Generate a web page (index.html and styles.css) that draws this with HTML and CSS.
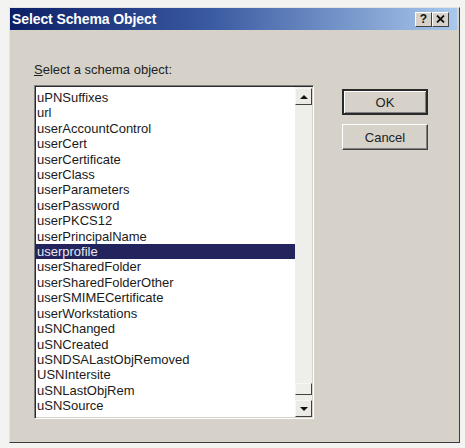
FILE: index.html
```html
<!DOCTYPE html>
<html lang="en">

<head>
    <meta charset="UTF-8">
    <title>Select Schema Object</title>
    <link rel="stylesheet" href="styles.css">
</head>

<body>
    <div class="window">
        <!-- title bar -->
        <div class="titlebar">
            <span class="title">Select Schema Object</span>
            <div class="caption-btns">
                <span class="cap-btn">?</span>
                <span class="cap-btn cap-close">
                    <svg width="9" height="8" viewBox="0 0 9 8">
                        <path d="M1 0.5 L8 7.5 M8 0.5 L1 7.5" stroke="#111" stroke-width="1.8" fill="none"/>
                    </svg>
                </span>
            </div>
        </div>

        <div class="body">
            <div class="left">
                <div class="label"><u>S</u>elect a schema object:</div>
                <div class="listbox">
                    <div class="items">
                        <div class="item">uPNSuffixes</div>
                        <div class="item">url</div>
                        <div class="item">userAccountControl</div>
                        <div class="item">userCert</div>
                        <div class="item">userCertificate</div>
                        <div class="item">userClass</div>
                        <div class="item">userParameters</div>
                        <div class="item">userPassword</div>
                        <div class="item">userPKCS12</div>
                        <div class="item">userPrincipalName</div>
                        <div class="item selected">userprofile</div>
                        <div class="item">userSharedFolder</div>
                        <div class="item">userSharedFolderOther</div>
                        <div class="item">userSMIMECertificate</div>
                        <div class="item">userWorkstations</div>
                        <div class="item">uSNChanged</div>
                        <div class="item">uSNCreated</div>
                        <div class="item">uSNDSALastObjRemoved</div>
                        <div class="item">USNIntersite</div>
                        <div class="item">uSNLastObjRem</div>
                        <div class="item">uSNSource</div>
                    </div>
                    <div class="scrollbar">
                        <div class="sb-btn"><span class="arrow-up"></span></div>
                        <div class="sb-thumb"></div>
                        <div class="sb-btn"><span class="arrow-down"></span></div>
                    </div>
                </div>
            </div>

            <div class="buttons">
                <button class="btn btn-default">OK</button>
                <button class="btn">Cancel</button>
            </div>
        </div>
    </div>
</body>

</html>
```

FILE: styles.css
```css
/* page background around the dialog */
html,
body {
    margin: 0;
    background-color: #f3f3f1;
    font-family: "Liberation Sans", Arial, sans-serif;
}

.window {
    margin: 7px 0 0 9px;
    width: 451px;
    height: 436px;
    box-sizing: border-box;
    background-color: #d6d2ca;
    border: 1px solid;
    border-color: #e6e4de #3c3c3c #3c3c3c #e6e4de;
}

/* title bar with the blue gradient */
.titlebar {
    height: 22px;
    margin-right: 2px;
    display: flex;
    align-items: center;
    justify-content: space-between;
    padding: 0 8px 0 2px;
    background: linear-gradient(90deg, #0c1f66 0%, #3a5aa2 45%, #a9c8ec 100%);
}

.title {
    color: #fff;
    font-weight: bold;
    font-size: 14px;
    letter-spacing: -0.1px;
}

.caption-btns {
    display: flex;
}

.cap-btn {
    width: 17px;
    height: 15px;
    box-sizing: border-box;
    display: flex;
    align-items: center;
    justify-content: center;
    background-color: #d6d2ca;
    border: 1px solid;
    border-color: #fff #404040 #404040 #fff;
    font-size: 12px;
    font-weight: bold;
    color: #111;
}

.body {
    display: flex;
    padding: 32px 0 0 24px;
}

.label {
    font-size: 13px;
    line-height: 15px;
    color: #222;
    margin-bottom: 8px;
}

/* the list box with its sunken border */
.listbox {
    width: 280px;
    height: 334px;
    box-sizing: border-box;
    display: flex;
    background-color: #fff;
    border: 1px solid;
    border-color: #808080 #fff #fff #808080;
    box-shadow: inset 1px 1px 0 #2a2a2a, inset -1px -1px 0 #d6d2ca;
    padding: 1px;
}

.items {
    flex: 1;
    overflow: hidden;
    padding-top: 3px;
}

.item {
    font-size: 13px;
    line-height: 15.4px;
    padding-left: 1px;
    color: #1a1a1a;
    white-space: nowrap;
}

.item.selected {
    background-color: #23245e;
    color: #e8e8f0;
}

.scrollbar {
    width: 17px;
    display: flex;
    flex-direction: column;
    background-color: #eeeeeb;
    padding-top: 1px;
}

.sb-btn {
    height: 17px;
    box-sizing: border-box;
    display: flex;
    align-items: center;
    justify-content: center;
    background-color: #ebeae6;
    border: 1px solid;
    border-color: #f6f6f4 #404040 #404040 #f6f6f4;
}

.sb-thumb {
    height: 12px;
    margin-top: auto;
    margin-bottom: 5px;
    box-sizing: border-box;
    border: 1px solid;
    border-color: #f6f6f4 #404040 #404040 #f6f6f4;
}

.arrow-up,
.arrow-down {
    width: 0;
    height: 0;
    border-left: 4px solid transparent;
    border-right: 4px solid transparent;
}

.arrow-up {
    border-bottom: 4px solid #111;
}

.arrow-down {
    border-top: 4px solid #111;
}

/* OK / Cancel */
.buttons {
    display: flex;
    flex-direction: column;
    gap: 9px;
    margin-left: 28px;
    margin-top: 27px;
}

.btn {
    width: 86px;
    height: 26px;
    box-sizing: border-box;
    font-family: "Liberation Sans", Arial, sans-serif;
    font-size: 13px;
    color: #222;
    background-color: #d6d2ca;
    border: 1px solid;
    border-color: #fff #404040 #404040 #fff;
    box-shadow: inset -1px -1px 0 #808080;
    padding: 0;
}

.btn-default {
    border: 2px solid #1e1e1e;
    border-color: #2a2a2a;
    box-shadow: inset 1px 1px 0 #fff, inset -1px -1px 0 #808080;
}
```
